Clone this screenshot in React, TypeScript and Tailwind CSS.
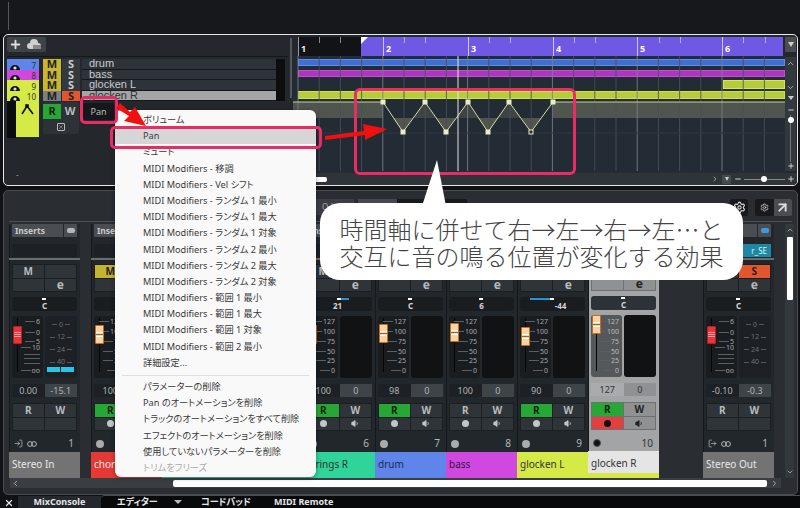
import React from "react";
import { Plus, ChevronUp, ChevronDown, ChevronLeft, ChevronRight, Minus, LogIn, LogOut, Settings, ArrowUpRight, Volume1, X } from "lucide-react";

type StripProps = {
  name: string; color: string; accent?: string; text?: string; selected?: boolean; audio?: boolean;
  m?: boolean; s?: boolean; r?: boolean; rec?: boolean; pan?: string; panBar?: [number, number]; panShift?: number;
  v1: string; v2: string; fader?: number; num: string; out?: boolean; input?: boolean; meter?: boolean; slot?: string; dialDark?: boolean;
};

const midiScale: [string, number][] = [["127", 6], ["100", 16], ["75", 26], ["50", 36], ["25", 45], ["0", 55]];
const audioScale: [string, number][] = [["6", 6], ["0", 17], ["5", 26], ["10", 32], ["", 39], ["", 43], ["", 48], ["oo", 55]];

function Handle({ audio, top }: { audio?: boolean; top: number }) {
  return (
    <div className={`absolute left-[1px] w-[9px] rounded-[1px] border flex flex-col justify-center gap-[1px] ${audio ? "h-[18px] border-[#b52026] bg-[#e8343c]" : "h-[19px] border-[#c96d1a] bg-[#f8d3a6]"}`} style={{ top }}>
      <div className={`h-[1px] ${audio ? "bg-[#f79a9a]" : "bg-white"}`} />
      <div className={`h-[1px] ${audio ? "bg-[#f79a9a]" : "bg-[#8a6a44]"}`} />
      <div className={`h-[1px] ${audio ? "bg-[#f79a9a]" : "bg-white"}`} />
    </div>
  );
}

function Strip(p: StripProps) {
  const sel = p.selected;
  const box = sel ? "bg-[#8f9193]" : "bg-[#2f3438]";
  const line = sel ? "border-[#6e7072]" : "border-[#1c1f22]";
  const label = sel ? "text-[#222]" : "text-[#b9bcbf]";
  return (
    <div className={`w-[71px] shrink-0 flex flex-col shadow-[inset_1px_0_0_#15181a] ${sel ? "bg-[#a2a4a6]" : "bg-[#22272b]"}`}>
      <div className="px-[3px] flex flex-col">
        <div className="h-[13px] flex gap-[1px]">
          <div className="flex-1 bg-[#4a4e52] text-[8.5px] leading-[13px] font-bold text-[#c8cacc] px-[3px]">Inserts</div>
          <div className="w-[13px] bg-[#4a4e52] flex items-center justify-center">
            <div className={`w-[8px] h-[5px] rounded-[2px] ${p.out ? "bg-[#3b9be0]" : "bg-[#b4b7ba]"}`} />
          </div>
        </div>
        <div className={`h-[13px] mt-[7px] text-[8px] leading-[13px] text-right pr-1 text-[#cfe] ${p.slot ? "bg-[#1f87a3]" : "bg-[#1d2125]"}`}>{p.slot}</div>
      </div>
      <div className="h-[2px] mt-[1px] bg-[#6a6d70]" />
      <div className="px-[3px] pt-[4px] flex flex-col">
        <div className={`grid grid-cols-2 border ${line}`}>
          <div className={`h-[13px] border-r ${line} text-center text-[10px] leading-[13px] font-bold ${p.m ? "bg-[#c4b32c] text-[#222]" : `${box} ${label}`}`}>M</div>
          <div className={`h-[13px] text-center text-[10px] leading-[13px] font-bold ${p.s ? "bg-[#e2562f] text-[#222]" : `${box} ${label}`}`}>{p.audio && !p.s ? "" : "S"}</div>
          <div className={`h-[13px] border-t border-r ${line} ${box}`} />
          <div className={`h-[13px] border-t ${line} ${box} text-center text-[12px] leading-[11px] font-bold ${label}`}>e</div>
        </div>
        <div className={`relative h-[14px] mt-[5px] rounded-[3px] flex justify-center ${sel ? "bg-[#2c3237]" : "bg-[#1a1d20]"}`}>
          {p.panBar ? (
            <div className="absolute top-[1px] h-[2px] bg-[#2a93d5]" style={{ left: p.panBar[0], width: p.panBar[1] }} />
          ) : null}
          <div className="absolute top-[1px] left-[30px] w-[4px] h-[2px] bg-white" />
          <span className="text-[8px] leading-[8px] pt-[5px] text-[#d5d5d5] font-bold" style={{ marginLeft: p.panShift ?? 0 }}>{p.pan ?? "C"}</span>
        </div>
        <div className="h-[62px] mt-[5px] flex gap-[2px]">
          <div className={`relative w-[31px] rounded-[3px] ${sel ? "bg-[#55585b]" : "bg-[#1a1d20]"}`}>
            <div className="absolute left-[5px] top-[2px] bottom-[6px] w-[1px] bg-[#050505]" />
            {(p.audio ? audioScale : midiScale).map(([t, y], i) => (
              <div key={i} className="absolute right-[3px] flex items-center justify-end gap-[1px] h-[9px]" style={{ top: y - 4.5 }}>
                <div className={`h-[1px] bg-[#5b5f63] ${t ? "w-[10px]" : "w-[16px]"}`} />
                {t ? <span className={`text-[7px] leading-[9px] ${sel ? "text-[#b9bbbd]" : "text-[#a6a9ac]"}`}>{t}</span> : null}
              </div>
            ))}
            <Handle audio={p.audio} top={p.fader ?? 9} />
          </div>
          <div className={`flex-1 rounded-[3px] relative flex flex-col pt-[5px] gap-[4.5px] ${p.audio ? "bg-[#1d2125]" : "bg-[#101214]"}`}>
            {p.audio && ["0", "12", "24", "40"].map((t) => (
              <div key={t} className="h-[8px] flex items-center justify-center gap-[2px] text-[7px] leading-[8px] text-[#6d7174]">
                <div className="w-[5px] h-[1px] bg-[#55595c]" />{t}<div className="w-[5px] h-[1px] bg-[#55595c]" />
              </div>
            ))}
            {p.meter && (
              <div className="absolute left-[2px] right-[3px] bottom-[6px] h-[5px] flex gap-[1px]">
                <div className="flex-1 bg-[#27c6e8]" /><div className="flex-1 bg-[#27c6e8]" />
              </div>
            )}
          </div>
        </div>
        <div className="h-[13px] mt-[6px] flex text-[9px] leading-[13px] text-center">
          <div className={`flex-1 ${sel ? "bg-[#a9abad] text-[#333]" : "bg-[#1d2125] text-[#b0b3b6]"}`}>{p.v1}</div>
          <div className={`flex-1 ${sel ? "bg-[#8f9193] text-[#333]" : "bg-[#3f4448] text-[#b0b3b6]"}`}>{p.v2}</div>
        </div>
        <div className={`grid grid-cols-2 mt-[6px] border ${line}`}>
          <div className={`h-[13px] border-r ${line} text-center text-[10px] leading-[13px] font-bold ${p.r ? "bg-[#27a735] text-[#10240f]" : `${box} ${label}`}`}>R</div>
          <div className={`h-[13px] text-center text-[10px] leading-[13px] font-bold ${box} ${label}`}>W</div>
          <div className={`h-[13px] border-t border-r ${line} flex items-center justify-center ${p.rec ? "bg-[#e2403f]" : box}`}>
            {!p.audio && <div className={`w-[7px] h-[7px] rounded-full ${p.rec ? "bg-[#111]" : "bg-[#c3c5c7]"}`} />}
          </div>
          <div className={`h-[13px] border-t ${line} flex items-center justify-center ${box}`}>
            {!p.audio && <Volume1 size={9} className={sel ? "text-[#222] fill-[#222]" : "text-[#c3c5c7] fill-[#c3c5c7]"} />}
          </div>
        </div>
        <div className="h-[14px] mt-[6px] flex items-center px-[2px] gap-[4px] text-[10px] text-[#b4b7ba]">
          {p.audio ? (
            <>
              {p.out ? <LogOut size={9} /> : <LogIn size={9} />}
              <svg width="10" height="6" viewBox="0 0 10 6" fill="none" stroke="#b4b7ba" strokeWidth="1"><circle cx="3" cy="3" r="2.4" /><circle cx="7" cy="3" r="2.4" /></svg>
            </>
          ) : (
            <div className={`w-[8px] h-[8px] rounded-full ${p.dialDark ? "bg-[#111] border border-[#555]" : "bg-[#a9abad]"}`} />
          )}
          <span className={`ml-auto pr-[1px] ${sel ? "text-[#333]" : ""}`}>{p.num}</span>
        </div>
      </div>
      <div className="h-[27px] mt-[1px] flex flex-col" style={{ background: p.color }}>
        <div className={`flex-1 text-[10px] leading-[24px] px-[3px] whitespace-nowrap overflow-hidden ${p.text ?? "text-[#e8e8e8]"}`}>{p.name}</div>
        {p.accent && <div className="h-[5px]" style={{ background: p.accent }} />}
      </div>
    </div>
  );
}

const tracks = [
  { c: "bg-[#5f84ea]", n: "7", name: "drum" },
  { c: "bg-[#cf49e0]", n: "8", name: "bass" },
  { c: "bg-[#d6ea47]", n: "9", name: "glocken L" },
  { c: "bg-[#d6ea47]", n: "10", name: "glocken R", sel: true },
];

const menu1 = ["ボリューム", "Pan", "ミュート", "MIDI Modifiers - 移調", "MIDI Modifiers - Vel シフト", "MIDI Modifiers - ランダム 1 最小", "MIDI Modifiers - ランダム 1 最大", "MIDI Modifiers - ランダム 1 対象", "MIDI Modifiers - ランダム 2 最小", "MIDI Modifiers - ランダム 2 最大", "MIDI Modifiers - ランダム 2 対象", "MIDI Modifiers - 範囲 1 最小", "MIDI Modifiers - 範囲 1 最大", "MIDI Modifiers - 範囲 1 対象", "MIDI Modifiers - 範囲 2 最小", "詳細設定..."];
const menu2 = ["パラメーターの削除", "Pan のオートメーションを削除", "トラックのオートメーションをすべて削除", "エフェクトのオートメーションを削除", "使用していないパラメーターを削除"];

const pts: [number, number][] = [[382, 104], [402, 134], [424, 104], [445, 134], [467, 104], [487, 134], [508, 104], [530, 134], [552, 104]];

function Dial() {
  return (
    <svg width="12" height="9" viewBox="0 0 12 9" className="ml-[2px]">
      <path d="M1 9a5 5 0 0 1 10 0z" fill="#111" />
      <circle cx="6" cy="7" r="1.6" fill="#ddd" />
    </svg>
  );
}

export default function App() {
  const grid: number[] = [];
  for (let x = 297; x < 785; x += 21.2) grid.push(x);
  return (
    <div className="relative w-[800px] h-[508px] overflow-hidden bg-[#101114] font-['Noto_Sans','Noto_Sans_CJK_JP',sans-serif] flex flex-col">
      <div className="h-[34px] shrink-0 bg-[#17181b] pl-[8px] pt-[2px]">
        <div className="w-[1px] h-[28px] bg-[#55585b]" />
      </div>

      {/* Project window */}
      <div className="h-[152px] shrink-0 ml-[3px] mr-[2px] rounded-[5px] border-[1.5px] border-[#e8e8e8] bg-[#24282c] flex overflow-hidden">
        <div className="w-[284px] shrink-0 pt-[2px] pl-[3px] flex flex-col">
          <div className="h-[20px] border-b border-[#15181a]">
            <div className="w-[39px] h-[15px] bg-[#3e4347] rounded-[2px] flex items-center gap-[5px] px-[2px]">
              <Plus size={13} strokeWidth={3.5} className="text-[#ddd]" />
              <svg width="14" height="11" viewBox="0 0 14 11"><path d="M3 10a3 3 0 0 1 0-6 4 4 0 0 1 8 0 3 3 0 0 1 0 6z" fill="#cfd1d3" /><rect x="6" y="6" width="8" height="4" fill="#888" /></svg>
            </div>
          </div>
          <div className="mt-[2px] flex flex-col">
            {tracks.map((t) => (
              <div key={t.n} className="h-[10.5px] flex overflow-hidden">
                <div className={`w-[32px] ${t.c} flex items-end justify-between pr-[3px]`}>
                  <Dial />
                  <span className="text-[8px] leading-[8px] text-[#333]">{t.n}</span>
                </div>
                <div className={`w-[18px] ml-[4px] text-center text-[11px] leading-[10px] font-bold ${t.sel ? "bg-[#7d8082] text-[#222]" : "bg-[#c9b733] text-[#222]"}`}>M</div>
                <div className={`w-[18px] ml-[1px] text-center text-[11px] leading-[10px] font-bold ${t.sel ? "bg-[#e2562f] text-[#222]" : "bg-[#34393d] text-[#ccc]"}`}>S</div>
                <div className={`w-[194px] ml-[2px] pl-[7px] font-['Liberation_Sans',sans-serif] text-[11px] leading-[9px] border-b border-[#15181a] ${t.sel ? "bg-[#a3a5a7] text-[#333]" : "bg-[#2d3338] text-[#c8cacc]"}`}>{t.name}</div>
                <div className="w-[9px] bg-[#0c0d0e]" />
              </div>
            ))}
            <div className="h-[37px] flex">
              <div className="w-[9px] bg-[#0c0d0e]" />
              <div className="w-[23px] bg-[#d6ea47] flex justify-center pt-[3px] h-[36px]">
                <svg width="13" height="12" viewBox="0 0 13 12" fill="none" stroke="#111" strokeWidth="1.6"><path d="M1 10 L6 2 L12 10" /><rect x="5" y="1" width="2" height="2" fill="#111" /></svg>
              </div>
              <div className="ml-[4px] w-[36px] h-[32px] mt-[1px] bg-[#2d3236] rounded-[2px] flex flex-col">
                <div className="flex h-[15px] mt-[2px]">
                  <div className="w-[18px] bg-[#27a735] text-center text-[11px] leading-[14px] font-bold text-[#10240f]">R</div>
                  <div className="flex-1 text-center text-[11px] leading-[14px] font-bold text-[#bbb]">W</div>
                </div>
                <div className="flex-1 flex items-center justify-center">
                  <div className="w-[8px] h-[8px] border border-[#bbb] rounded-[1px] flex items-center justify-center"><X size={6} className="text-[#bbb]" /></div>
                </div>
              </div>
              <div className="ml-[4px] w-[31px] h-[17px] mt-[2px] bg-[#15181a] rounded-[2px] text-[9px] leading-[17px] text-center text-[#b9bcbf]">Pan</div>
            </div>
          </div>
          <div className="mt-auto mb-[6px] pl-[9px] text-[8px] leading-[8px] text-[#999]">-</div>
        </div>

        <div className="w-[5px] shrink-0 flex flex-col items-center pt-[3px]">
          <div className="w-[2px] h-[60px] bg-[#55595c]" />
        </div>

        <div className="flex-1 relative flex flex-col">
          <div className="h-[21px] shrink-0 flex pl-[5px] pt-[2px]">
            <div className="w-[63px] bg-[#111317] relative">
              <div className="absolute left-0 top-0 bottom-0 w-[1px] bg-[#9a9a9a]" />
              <span className="absolute left-[3px] top-[6px] text-[9px] leading-[11px] font-bold text-[#eee]">1</span>
              {[21, 42].map((x) => <div key={x} className="absolute top-0 h-[6px] w-[1px] bg-[#8a8a8a]" style={{ left: x }} />)}
            </div>
            <div className="relative w-[422px] bg-[#6f58e3]">
              <div className="absolute left-0 top-0 border-t-[7px] border-r-[7px] border-t-white border-r-transparent" />
              {[1, 2, 3, 5, 6, 7, 9, 10, 11, 13, 14, 15, 17, 18, 19].map((k) => (
                <div key={k} className="absolute top-0 h-[6px] w-[1px] bg-[#b8aef2]" style={{ left: 22 + (k - 1) * 21.2 + 21.2 - 21.2 }} />
              ))}
              {[["2", 22], ["3", 107], ["4", 192], ["5", 276], ["6", 361]].map(([t, x]) => (
                <div key={t as string} className="absolute top-0 bottom-0 w-[1px] bg-[#cfc8f5]" style={{ left: x as number }}>
                  <span className="absolute left-[3px] top-[6px] text-[9px] leading-[11px] font-bold text-white">{t}</span>
                </div>
              ))}
            </div>
            <div className="flex-1 pl-[2px]">
              <div className="w-[11px] h-[15px] bg-[#4a4e52] rounded-[1px] flex items-center justify-center">
                <div className="border-t-[5px] border-x-[3px] border-t-[#ccc] border-x-transparent" />
              </div>
            </div>
          </div>

          <div className="flex-1 relative bg-[#232b35] mr-[12px] overflow-hidden">
            <div className="h-[3px]" />
            <div className="h-[7px] ml-[5px] bg-[#3f6fcf] border border-[#5f8ce8]" />
            <div className="h-[7px] mt-[4px] ml-[5px] bg-[#ab37bf] border border-[#c050d0]" />
            <div className="h-[9px] mt-[3px] ml-[430px] bg-[#b6cc3d] border border-[#d6ea47]" />
            <div className="h-[8px] mt-[2px] ml-[5px] bg-[#b6cc3d] border border-[#cfe24a]" />
            <svg className="absolute left-0 top-0" width="494" height="115" viewBox="292 58 494 115">
              <rect x="292" y="104" width="90" height="16" fill="#50554e" />
              <rect x="552" y="104" width="234" height="16" fill="#50554e" />
              <polygon points="382,104 392,120 412,120 424,104 435,120 455,120 467,104 477,120 497,120 508,104 520,120 540,120 552,104" fill="#232b35" />
              <polygon points="412,120 424,104 435,120" fill="#3d4443" />
              <polygon points="455,120 467,104 477,120" fill="#3d4443" />
              <polygon points="497,120 508,104 520,120" fill="#3d4443" />
              <polygon points="392,120 402,134 412,120" fill="#50554e" />
              <polygon points="435,120 445,134 455,120" fill="#50554e" />
              <polygon points="477,120 487,134 497,120" fill="#50554e" />
              <polygon points="520,120 530,134 540,120" fill="#50554e" />
              {grid.map((x, i) => (
                <line key={x} x1={x} y1="58" x2={x} y2="173" stroke={i % 4 === 0 ? "#7b838a" : "#4a525b"} strokeWidth="1" opacity={0.85} />
              ))}
              <line x1="292" y1="135" x2="786" y2="135" stroke="#2f3742" />
              <line x1="292" y1="104" x2="382" y2="104" stroke="#c8d09a" strokeWidth="1" />
              <line x1="552" y1="104" x2="786" y2="104" stroke="#c8d09a" strokeWidth="1" />
              <polyline points={pts.map((p) => p.join(",")).join(" ")} fill="none" stroke="#d5dba6" strokeWidth="1" />
              {pts.map(([x, y], i) => (
                <rect key={i} x={x - 2} y={y - 2} width="4" height="4" fill={i === 7 ? "#2a2f2a" : "#e9ecc8"} stroke="#e9ecc8" strokeWidth="1" />
              ))}
              <line x1="457" y1="58" x2="457" y2="173" stroke="#e6e6e6" strokeWidth="1" />
            </svg>
          </div>
          <div className="h-[12px] shrink-0 bg-[#2f3439] flex items-center text-[#ccc] pr-[2px]">
            <div className="w-[34px] h-[5px] bg-white rounded-[2px]" />
            <ChevronRight size={8} className="ml-auto" />
            <div className="ml-[3px] w-[9px] h-[9px] bg-[#454a4e] flex items-center justify-center"><div className="border-t-[4px] border-x-[2.5px] border-t-[#ccc] border-x-transparent" /></div>
            <Minus size={8} strokeWidth={3} className="ml-[3px]" />
            <div className="relative ml-[2px] w-[41px] h-[1px] bg-[#888]"><div className="absolute left-[17px] -top-[2.5px] w-[6px] h-[6px] rounded-full bg-white" /></div>
            <Plus size={8} strokeWidth={3} className="ml-[2px]" />
          </div>
          <div className="absolute right-[1px] top-[22px] w-[11px] h-[114px] bg-[#33383c] flex flex-col items-center text-[#ccc]">
            <ChevronUp size={9} className="mt-[2px]" />
            <ChevronDown size={9} className="mt-[15px]" />
            <div className="mt-[4px] border-t-[4px] border-x-[3px] border-t-[#ccc] border-x-transparent" />
            <Minus size={8} strokeWidth={3} className="mt-[6px]" />
            <div className="relative flex-1 w-[1px] bg-[#777] mt-[1px]"><div className="absolute -left-[2.5px] top-[2px] w-[6px] h-[6px] rounded-full bg-white" /></div>
            <Plus size={8} strokeWidth={3} className="mb-[1px]" />
          </div>
        </div>
      </div>

      {/* MixConsole */}
      <div className="h-[305px] shrink-0 mt-[4px] ml-[3px] mr-[2px] rounded-[5px] border border-[#4a4d50] bg-[#2a2e32] flex flex-col overflow-hidden">
        <div className="h-[30px] shrink-0 relative flex items-start justify-end pt-[8px] pr-[5px] gap-[7px]">
          <div className="absolute left-[312px] top-[8px] flex h-[16px] text-[8px] leading-[16px] text-[#aaa]">
            <div className="w-[38px] bg-[#3b3f43] pl-[6px]">Q-L</div>
            <div className="ml-[4px] w-[39px] bg-[#44484c]" />
            <div className="w-[70px] bg-[#181a1d]" />
          </div>
          <div className="w-[18px] h-[17px] bg-[#17191c] rounded-[2px] flex items-center justify-center"><Settings size={13} className="text-[#ddd]" /></div>
          <div className="w-[37px] h-[17px] flex rounded-[2px] overflow-hidden">
            <div className="flex-1 bg-[#17191c] flex items-center justify-center"><Settings size={9} className="text-[#ddd]" /></div>
            <div className="flex-1 bg-[#4a4e52] flex items-center justify-center"><ArrowUpRight size={15} strokeWidth={3} className="text-[#ddd]" /></div>
          </div>
        </div>
        <div className="h-[1px] mx-[5px] bg-[#4d5054]" />
        <div className="h-[2px]" />
        <div className="flex-1 flex pl-[5px] min-h-0">
          <Strip audio name="Stereo In" color="#737373" v1="0.00" v2="-15.1" num="1" fader={10} meter />
          <div className="w-[11px] shrink-0" />
          <Strip name="chord L" color="#e53935" m r v1="100" v2="0" num="2" />
          <Strip name="chord R" color="#2fd49a" v1="100" v2="0" num="3" text="text-[#333]" />
          <Strip name="strings L" color="#2fd49a" v1="100" v2="0" num="4" text="text-[#333]" />
          <Strip name="strings R" color="#2fd49a" r v1="100" v2="0" num="6" pan="21" panBar={[30, 12]} panShift={-4} text="text-[#333]" />
          <Strip name="drum" color="#5f84ea" r v1="98" v2="0" num="7" fader={8} text="text-[#1c2a55]" />
          <Strip name="bass" color="#cf49e0" v1="100" v2="0" num="8" pan="6" fader={7} text="text-[#3a1040]" />
          <Strip name="glocken L" color="#d6ea47" r v1="90" v2="0" num="9" pan="-44" panBar={[10, 20]} panShift={16} fader={11} text="text-[#333]" />
          <Strip name="glocken R" color="#e5e5e5" accent="#d6ea47" selected r rec v1="127" v2="0" num="10" fader={0} text="text-[#333]" dialDark />
          <div className="w-[44px] shrink-0" />
          <Strip audio out s name="Stereo Out" color="#737373" v1="-0.10" v2="-0.3" num="1" fader={10} slot="r_SE" />
          <div className="w-[11px] shrink-0" />
          <div className="w-[9px] shrink-0 h-[254px] bg-[#33383c] rounded-[2px] flex flex-col items-center text-[#ccc]">
            <ChevronUp size={8} className="mt-[2px]" />
            <div className="w-[6px] h-[63px] mt-[3px] bg-white rounded-[1px]" />
            <ChevronDown size={8} className="mt-auto mb-[2px]" />
          </div>
        </div>
        <div className="h-[10px] shrink-0 mb-[6px] ml-[6px] mr-[16px] bg-[#3a3e42] flex items-center text-[#ccc]">
          <ChevronLeft size={9} className="ml-[1px]" />
          <div className="ml-[153px] w-[594px] h-[7px] bg-white rounded-[2px]" />
          <ChevronRight size={9} className="ml-[3px]" />
        </div>
      </div>

      {/* Tabs */}
      <div className="flex-1 flex items-end text-[9px] leading-[12px] font-bold text-[#e5e5e5] overflow-hidden [font-feature-settings:'palt']">
        <div className="w-[18px] flex justify-center"><X size={10} strokeWidth={3} /></div>
        <div className="w-[83px] h-[12px] bg-[#25282c] text-center">MixConsole</div>
        <div className="flex-1 h-[13px] bg-[#08090a] border-t border-[#4a4d50] rounded-tl-[4px] flex items-center">
          <span className="ml-[16px] w-[34px] whitespace-nowrap">エディター</span>
          <div className="ml-[23px] border-t-[4px] border-x-[4px] border-t-[#bbb] border-x-transparent" />
          <span className="ml-[19px] w-[42px] whitespace-nowrap">コードパッド</span>
          <span className="ml-[31px] whitespace-nowrap">MIDI Remote</span>
        </div>
      </div>

      {/* Context menu */}
      <div className="absolute left-[115px] top-[110px] w-[201px] h-[367px] bg-[#f9f9f9] rounded-[6px] pt-[2px] shadow-[0_1px_4px_rgba(0,0,0,0.4)] text-[9.2px] leading-[16.2px] text-[#3a3a3a] whitespace-nowrap [font-feature-settings:'palt']">
        {menu1.map((t, i) => (
          <div key={t} className={`pl-[28px] h-[16.2px] ${i === 1 ? "bg-[#d6d6d6]" : ""}`}>{t}</div>
        ))}
        <div className="h-[1px] mx-[7px] my-[3.5px] bg-[#dedede]" />
        {menu2.map((t) => (
          <div key={t} className="pl-[28px] h-[16.2px]">{t}</div>
        ))}
        <div className="pl-[28px] h-[16.2px] text-[#aaa]">トリムをフリーズ</div>
      </div>

      {/* Annotations */}
      <div className="absolute left-[80px] top-[96px] w-[38px] h-[28px] rounded-[5px] border-[3px] border-[#e82c64]" />
      <div className="absolute left-[110px] top-[126px] w-[212px] h-[23px] rounded-[5px] border-[3px] border-[#e82c64]" />
      <div className="absolute left-[354px] top-[88px] w-[222px] h-[87px] rounded-[6px] border-[3px] border-[#e82c64]" />
      <svg className="absolute left-0 top-0 pointer-events-none" width="800" height="508" viewBox="0 0 800 508">
        <path d="M116 108 L120 103 L130 112 L135 107 L146 126 L124 121 L129 116 Z" fill="#f01010" />
        <path d="M325 140 L325 136 L364 131 L363 124 L387 129 L365 140 L365 135 Z" fill="#f01010" />
        <path d="M437 160 L422 206 L446 206 Z" fill="#ffffff" />
      </svg>
      <div className="absolute left-[320px] top-[203px] w-[423px] h-[77px] rounded-[20px] bg-white flex flex-col items-center justify-center text-[24px] leading-[27px] text-[#444] font-['Noto_Sans_CJK_JP',sans-serif] font-light whitespace-nowrap">
        <div>時間軸に併せて右→左→右→左…と</div>
        <div>交互に音の鳴る位置が変化する効果</div>
      </div>
    </div>
  );
}
